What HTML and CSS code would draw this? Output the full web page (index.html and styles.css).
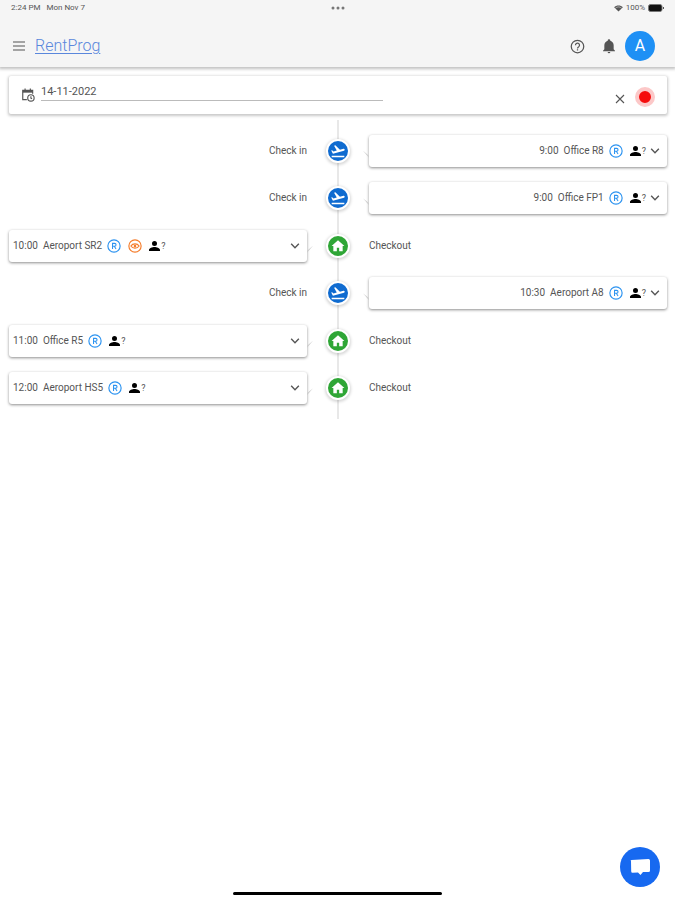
FILE: index.html
```html
<!DOCTYPE html>
<html lang="en">
<head>
<meta charset="utf-8">
<meta name="viewport" content="width=device-width, initial-scale=1">
<title>RentProg</title>
<link rel="stylesheet" href="styles.css">
</head>
<body>
<svg class="sprite" aria-hidden="true">
  <symbol id="person" viewBox="0 0 24 24"><path d="M12 12a5 5 0 1 0 0-10 5 5 0 0 0 0 10zm0 2c-4 0-11 2-11 6v2h22v-2c0-4-7-6-11-6z"/></symbol>
  <symbol id="chevron" viewBox="3 3 18 18"><path d="M7 8l5 5 5-5 1.500 1.500L12 16 5.500 9.500z"/></symbol>
  <symbol id="plane" viewBox="0 0 24 24"><path d="M2.500 19h19v2.300h-19zM22 9.600c-.2-.8-1-1.300-1.800-1.100l-5.300 1.500L8 3.500l-1.900.6 4.100 7.100-5 1.400-2-1.600-1.400.4 2.600 4.600L20.900 11.500c.8-.3 1.300-1.100 1.100-1.900z"/></symbol>
  <symbol id="home" viewBox="0 0 24 24"><path d="M12 2 1 12h3v9h6v-6h4v6h6v-9h3z"/></symbol>
  <symbol id="rent" viewBox="0 0 24 24"><circle cx="12" cy="12" r="10.500" fill="none" stroke="currentColor" stroke-width="2"/><path d="M9.500 17V7.500H13a2.500 2.500 0 0 1 0 5H9.500m3 0L15.500 17" fill="none" stroke="currentColor" stroke-width="1.800"/></symbol>
  <symbol id="wash" viewBox="0 0 24 24"><circle cx="12" cy="12" r="10.500" fill="none" stroke="currentColor" stroke-width="2"/><path d="M5 12c3-5 11-5 14 0-3 5-11 5-14 0z" fill="none" stroke="currentColor" stroke-width="2"/><circle cx="12" cy="12" r="2.200" fill="currentColor"/></symbol>
</svg>

<header class="topbar">
  <div class="status">
    <span class="status-time"><span>2:24 PM</span><span>Mon Nov 7</span></span>
    <svg class="dots" viewBox="0 0 14 4" aria-hidden="true"><circle cx="2" cy="2" r="1.500"/><circle cx="7" cy="2" r="1.500"/><circle cx="12" cy="2" r="1.500"/></svg>
    <span class="status-power">
      <svg class="wifi" viewBox="0 0 20 16" aria-hidden="true"><path d="M10 15 0 5C5-.5 15-.5 20 5z"/><path d="M3 7c4-3.500 10-3.500 14 0" fill="none" stroke="#f5f5f5" stroke-width="1.200"/></svg>
      <span>100%</span>
      <svg class="battery" viewBox="0 0 16 8" aria-hidden="true"><rect x=".5" y=".5" width="13.500" height="7" rx="2" fill="#111" stroke="#777"/><path d="M15 3h1v2h-1z"/></svg>
    </span>
  </div>
  <nav class="toolbar">
    <button class="icon-btn" aria-label="Menu"><svg class="menu-icon" viewBox="0 0 12 10"><path d="M0 1h12M0 5h12M0 9h12" stroke="currentColor" stroke-width="1.100"/></svg></button>
    <a class="brand" href="#">RentProg</a>
    <button class="icon-btn help" aria-label="Help"><svg class="help-icon" viewBox="0 0 24 24" fill="none" stroke="currentColor" stroke-width="2"><circle cx="12" cy="12" r="10"/><path d="M8.800 10a3.200 3.200 0 1 1 5.300 2.200C12.800 13.200 12 13.500 12 15m0 1.500v2"/></svg></button>
    <button class="icon-btn" aria-label="Notifications"><svg class="bell-icon" viewBox="0 0 24 24"><path d="M21 19v1H3v-1l2-2v-6c0-3.100 2-5.800 5-6.700V4a2 2 0 0 1 4 0v.3c3 .9 5 3.600 5 6.700v6zm-7 2a2 2 0 0 1-4 0z"/></svg></button>
    <button class="avatar" aria-label="Account">A</button>
  </nav>
</header>

<main>
  <form class="date-card">
    <label class="date-label" for="date" aria-label="Date"><svg class="calendar" viewBox="0 0 24 24" fill="none" stroke="currentColor" stroke-width="2"><path d="M10 20H3V4h17v6M7 1v4m9-4v4"/><path d="M3 6h17" stroke-width="4"/><circle cx="17" cy="17" r="5.500"/><path d="M17 14v3.500l2 1"/></svg></label>
    <input class="date-input" id="date" type="text" value="14-11-2022">
    <button class="clear" type="button" aria-label="Clear date"><svg viewBox="0 0 10 10"><path d="m1 1 8 8m0-8L1 9" stroke="currentColor" stroke-width="1.100"/></svg></button>
    <button class="record" type="button" aria-label="Record"></button>
  </form>

  <ol class="timeline">
    <li class="row check-in">
      <span class="kind">Check in</span>
      <span class="node"><svg><use href="#plane"/></svg></span>
      <button class="card"><span>9:00</span><span>Office R8</span><svg class="badge"><use href="#rent"/></svg><span class="client"><svg><use href="#person"/></svg>?</span><svg class="chevron"><use href="#chevron"/></svg></button>
    </li>
    <li class="row check-in">
      <span class="kind">Check in</span>
      <span class="node"><svg><use href="#plane"/></svg></span>
      <button class="card"><span>9:00</span><span>Office FP1</span><svg class="badge"><use href="#rent"/></svg><span class="client"><svg><use href="#person"/></svg>?</span><svg class="chevron"><use href="#chevron"/></svg></button>
    </li>
    <li class="row checkout">
      <button class="card"><span>10:00</span><span>Aeroport SR2</span><svg class="badge"><use href="#rent"/></svg><svg class="badge orange"><use href="#wash"/></svg><span class="client"><svg><use href="#person"/></svg>?</span><svg class="chevron"><use href="#chevron"/></svg></button>
      <span class="node"><svg><use href="#home"/></svg></span>
      <span class="kind">Checkout</span>
    </li>
    <li class="row check-in">
      <span class="kind">Check in</span>
      <span class="node"><svg><use href="#plane"/></svg></span>
      <button class="card"><span>10:30</span><span>Aeroport A8</span><svg class="badge"><use href="#rent"/></svg><span class="client"><svg><use href="#person"/></svg>?</span><svg class="chevron"><use href="#chevron"/></svg></button>
    </li>
    <li class="row checkout">
      <button class="card"><span>11:00</span><span>Office R5</span><svg class="badge"><use href="#rent"/></svg><span class="client"><svg><use href="#person"/></svg>?</span><svg class="chevron"><use href="#chevron"/></svg></button>
      <span class="node"><svg><use href="#home"/></svg></span>
      <span class="kind">Checkout</span>
    </li>
    <li class="row checkout">
      <button class="card"><span>12:00</span><span>Aeroport HS5</span><svg class="badge"><use href="#rent"/></svg><span class="client"><svg><use href="#person"/></svg>?</span><svg class="chevron"><use href="#chevron"/></svg></button>
      <span class="node"><svg><use href="#home"/></svg></span>
      <span class="kind">Checkout</span>
    </li>
  </ol>
</main>

<button class="chat" aria-label="Open chat"><svg viewBox="0 0 20 16"><path d="M1 2.200Q0 1 1.500.900L18.500 0q1.500 0 1.500 1.500v10q0 1.500-1.500 1.500H13l-2.500 3L8 13.500l-5.500.300q-1.300 0-1.300-1.500z"/></svg></button>
<div class="home-indicator"></div>
</body>
</html>
```
FILE: styles.css
```css
* {
  box-sizing: border-box;
}

body {
  margin: 0;
  min-height: 100vh;
  background: #fff;
  color: #555;
  font: 10px/16px Roboto, "Liberation Sans", sans-serif;
}

button,
input {
  margin: 0;
  padding: 0;
  border: 0;
  background: none;
  color: inherit;
  font: inherit;
}

svg {
  display: block;
  flex: none;
  fill: currentColor;
}

.sprite {
  position: absolute;
  width: 0;
  height: 0;
}

.topbar {
  padding-bottom: 6px;
  background: #f5f5f5;
  box-shadow: 0 1px 3px 1px rgba(0, 0, 0, 0.25);
}

.status {
  display: grid;
  grid-template-columns: 1fr auto 1fr;
  align-items: center;
  padding: 0 11px;
  font-size: 8px;
}

.status-time,
.status-power {
  display: flex;
  align-items: center;
  gap: 6px;
}

.status-power {
  justify-content: flex-end;
  gap: 3px;
}

.dots {
  width: 14px;
  height: 4px;
  color: #777;
}

.wifi {
  width: 9px;
  height: 7px;
}

.battery {
  width: 16px;
  height: 8px;
}

.toolbar {
  display: flex;
  align-items: center;
  height: 46px;
  padding: 14px 20px 0 13px;
  margin-bottom: -1px;
}

.icon-btn {
  display: grid;
  place-items: center;
}

.menu-icon {
  width: 12px;
  height: 10px;
}

.brand {
  margin-left: 10px;
  color: #5a87dc;
  font-size: 16px;
  font-weight: 300;
  line-height: 20px;
  text-underline-offset: 2px;
  text-decoration-thickness: 1px;
}

.help {
  margin-left: auto;
  margin-right: 16px;
}

.help-icon {
  width: 15px;
  height: 15px;
  fill: none;
}

.bell-icon {
  width: 16px;
  height: 16px;
}

.avatar {
  width: 30px;
  height: 30px;
  margin-left: 8px;
  border-radius: 50%;
  background: #1e90f5;
  color: #fff;
  font-size: 16px;
}

main {
  padding: 9px 8px 0 9px;
}

.date-card {
  display: flex;
  align-items: center;
  height: 38px;
  padding: 0 12px;
  border-radius: 2px;
  background: #fff;
  box-shadow: 0 1px 3px 1px rgba(0, 0, 0, 0.22);
}

.calendar {
  width: 14px;
  height: 14px;
  fill: none;
}

.date-input {
  width: 54%;
  height: 18px;
  margin: 0 auto 6px 6px;
  border-bottom: 1px solid #bbb;
  font-size: 11px;
}

.clear {
  margin-top: 8px;
}

.clear svg {
  width: 10px;
  height: 10px;
}

.record {
  width: 20px;
  height: 20px;
  margin-top: 4px;
  margin-left: 10px;
  border: 4px solid #fcc8c8;
  border-radius: 50%;
  background: #f50c0c;
}

.timeline {
  display: grid;
  grid-auto-rows: 1fr;
  min-height: 299px;
  margin: 6px 0 0;
  padding: 7px 0;
  background: linear-gradient(#e8e8e8, #e8e8e8) center / 2px 100% no-repeat;
  list-style: none;
}

.row {
  display: grid;
  grid-template-columns: 1fr 62px 1fr;
  align-items: center;
}

.check-in .kind {
  text-align: right;
}

.node {
  display: grid;
  place-items: center;
  justify-self: center;
  width: 24px;
  height: 24px;
  border: 2px solid #fff;
  border-radius: 50%;
  background: #0f6bd0;
  box-shadow: 0 1px 3px 1px rgba(0, 0, 0, 0.16);
  color: #fff;
}

.checkout .node {
  background: #2fa636;
}

.node svg {
  width: 16px;
  height: 16px;
}

.checkout .node svg {
  width: 14px;
  height: 14px;
}

.card {
  position: relative;
  display: flex;
  align-items: center;
  gap: 5px;
  height: 32px;
  padding: 0 6px 0 4px;
  border-radius: 3px;
  background: #fff;
  box-shadow: 0 1px 3px rgba(0, 0, 0, 0.45);
  white-space: nowrap;
}

.card::after {
  content: "";
  position: absolute;
  top: 16px;
  width: 6px;
  height: 7px;
  background: #ccc;
}

.check-in .card {
  justify-content: flex-end;
}

.check-in .card::after {
  right: 100%;
  clip-path: polygon(0 0, 100% 100%, 100% 70%);
}

.checkout .card::after {
  left: 100%;
  clip-path: polygon(100% 0, 0 100%, 0 70%);
}

.badge {
  width: 14px;
  height: 14px;
  color: #2c93f0;
}

.orange {
  margin-left: 2px;
  color: #f57c2b;
}

.client {
  display: flex;
  align-items: center;
  margin-left: 1px;
  font-size: 9px;
}

.client svg {
  width: 13px;
  height: 12px;
  color: #000;
}

.chevron {
  width: 12px;
  height: 12px;
}

.check-in .chevron {
  margin-left: -2px;
}

.checkout .chevron {
  margin-left: auto;
}

.chat {
  position: fixed;
  right: 15px;
  bottom: 13px;
  display: grid;
  place-items: center;
  width: 40px;
  height: 40px;
  border-radius: 50%;
  background: #1769f0;
  color: #fff;
}

.chat svg {
  width: 20px;
  height: 16px;
}

.home-indicator {
  position: fixed;
  right: 0;
  bottom: 5px;
  left: 0;
  width: 31%;
  height: 3px;
  margin: 0 auto;
  border-radius: 2px;
  background: #000;
}
```
